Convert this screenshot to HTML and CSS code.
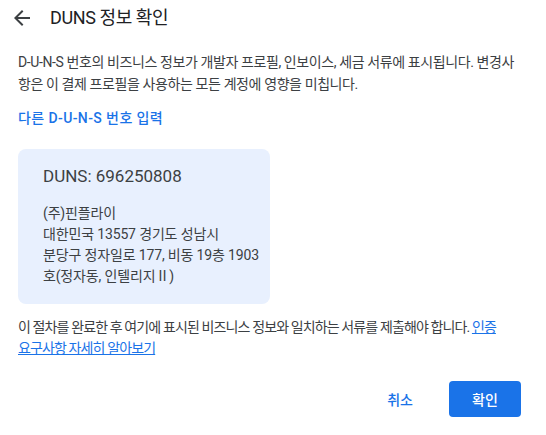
FILE: index.html
```html
<!DOCTYPE html>
<html lang="ko">
<head>
<meta charset="utf-8">
<title>DUNS 정보 확인</title>
<link rel="stylesheet" href="styles.css">
</head>
<body>
<div class="dialog">
  <header class="header">
    <button class="back" aria-label="뒤로">
      <svg viewBox="0 0 24 24" width="24" height="24"><path d="M20 11H7.83l5.59-5.59L12 4l-8 8 8 8 1.41-1.41L7.83 13H20v-2z" fill="#3c4043"/></svg>
    </button>
    <h1 class="title">DUNS 정보 확인</h1>
  </header>
  <main class="content">
    <p class="desc">D-U-N-S 번호의 비즈니스 정보가 개발자 프로필, 인보이스, 세금 서류에 표시됩니다. 변경사<br>항은 이 결제 프로필을 사용하는 모든 계정에 영향을 미칩니다.</p>
    <a class="link" href="#">다른 D-U-N-S 번호 입력</a>
    <div class="card">
      <div class="duns">DUNS: 696250808</div>
      <div class="address">
        <span class="line">(주)핀플라이</span>
        <span class="line">대한민국 13557 경기도 성남시</span>
        <span class="line">분당구 정자일로 177, 비동 19층 1903</span>
        <span class="line">호(정자동, 인텔리지Ⅱ)</span>
      </div>
    </div>
    <p class="note">이 절차를 완료한 후 여기에 표시된 비즈니스 정보와 일치하는 서류를 제출해야 합니다. <a class="ulink" href="#">인증<br>요구사항 자세히 알아보기</a></p>
  </main>
  <footer class="actions">
    <button class="btn text">취소</button>
    <button class="btn primary">확인</button>
  </footer>
</div>
</body>
</html>
```
FILE: styles.css
```css
html, body {
  margin: 0;
  padding: 0;
  background: #ffffff;
}
body {
  font-family: Roboto, "Noto Sans CJK KR", sans-serif;
  color: #3c4043;
  width: 546px;
  height: 435px;
  overflow: hidden;
}
.header {
  display: flex;
  align-items: center;
  height: 36px;
  padding-left: 10px;
  gap: 16px;
}
.back {
  width: 24px;
  height: 24px;
  padding: 0;
  border: 0;
  background: none;
  display: flex;
}
.title {
  margin: 0;
  font-size: 18px;
  font-weight: 400;
  color: #202124;
  line-height: 24px;
  letter-spacing: -0.4px;
}
.content {
  padding: 0 18px;
  display: flex;
  flex-direction: column;
  align-items: flex-start;
}
.desc {
  margin: 15px 0 0;
  font-size: 14px;
  line-height: 22px;
  letter-spacing: -0.4px;
  white-space: nowrap;
}
.link {
  margin-top: 12px;
  font-size: 14px;
  line-height: 22px;
  color: #1a73e8;
  text-decoration: none;
  font-weight: 500;
  letter-spacing: 0.4px;
}
.card {
  margin-top: 20px;
  width: 252px;
  box-sizing: border-box;
  padding: 15px 8px 17px 25px;
  background: #e8f0fe;
  border-radius: 8px;
}
.duns {
  font-size: 17px;
  line-height: 24px;
  color: #3c4043;
}
.address {
  margin-top: 15px;
  font-size: 14px;
  line-height: 21px;
  letter-spacing: -0.15px;
}
.line {
  display: block;
  white-space: nowrap;
}
.note {
  margin: 13px 0 0;
  font-size: 14px;
  line-height: 21px;
  letter-spacing: -0.88px;
  white-space: nowrap;
}
.ulink {
  color: #1a73e8;
  text-decoration: underline;
}
.actions {
  display: flex;
  justify-content: flex-end;
  align-items: center;
  gap: 20px;
  padding: 22px 25px 0 0;
}
.btn {
  font-family: Roboto, "Noto Sans CJK KR", sans-serif;
  font-size: 14px;
  font-weight: 500;
  height: 36px;
  border: 0;
  border-radius: 4px;
  cursor: pointer;
}
.text {
  background: none;
  color: #1a73e8;
  padding: 0 16px;
}
.primary {
  width: 72px;
  background: #1a73e8;
  color: #ffffff;
}
```
